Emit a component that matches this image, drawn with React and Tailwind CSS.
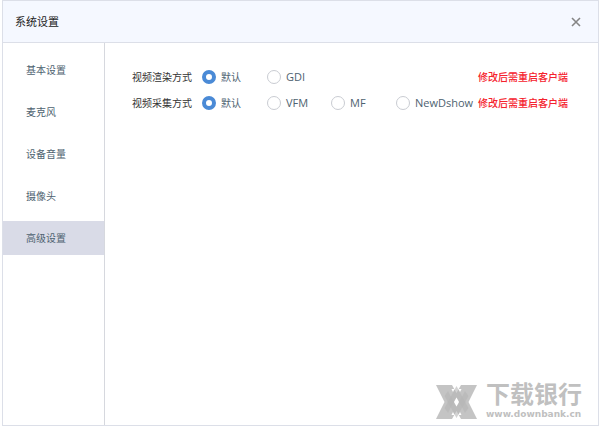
import React, { useState } from "react";

const sections = ["基本设置", "麦克风", "设备音量", "摄像头", "高级设置"];

const groups = [
  { name: "render", label: "视频渲染方式", options: ["默认", "GDI"] },
  { name: "capture", label: "视频采集方式", options: ["默认", "VFM", "MF", "NewDshow"] },
];

function RadioRow({ name, label, options }) {
  const [value, setValue] = useState(options[0]);
  return (
    <div
      role="radiogroup"
      aria-label={label}
      className="grid h-[26px] grid-cols-[70px_65px_64px_65px_82px_1fr] items-center"
    >
      <span className="text-[#333]">{label}</span>
      {options.map((option) => (
        <label key={option} className="flex items-center gap-[5px] whitespace-nowrap text-[#4e6270]">
          <input
            type="radio"
            name={name}
            checked={value === option}
            onChange={() => setValue(option)}
            className="size-3.5 shrink-0 appearance-none rounded-full border border-[#c9ccd2] bg-white checked:border-[4px] checked:border-[#4a8ad6]"
          />
          <span className={option === "默认" ? "text-[10px]/4" : "font-['Open_Sans',sans-serif] text-[11px]/4"}>
            {option}
          </span>
        </label>
      ))}
      <span className="col-start-6 font-medium whitespace-nowrap text-[#f5222d]">修改后需重启客户端</span>
    </div>
  );
}

function Watermark() {
  return (
    <div className="absolute right-4 bottom-1 flex items-center gap-[9px] text-[#c0c0c0]">
      <svg viewBox="0 0 41 34" className="h-[34px] w-[41px]" aria-hidden="true">
        <path d="M0 0H16L20.500 8L25 0H41L32.500 17L41 34H25L20.500 26L16 34H0L8.500 17Z" fill="#c4c4c4" />
        <path d="M20.500 1L32.500 23L29 28L20.500 12L12 28L8.500 23Z" fill="#b6b6b6" opacity=".6" />
        <path d="M20.500 33L32.500 11L29 6L20.500 22L12 6L8.500 11Z" fill="#b6b6b6" opacity=".6" />
        <path d="M20.500 12.500L18 17L20.500 21.500L23 17ZM15.500 4H18.500L17 7ZM25.500 4H22.500L24 7ZM15.500 30H18.500L17 27ZM25.500 30H22.500L24 27Z" fill="#fff" />
      </svg>
      <div>
        <div className="font-['Liberation_Sans','Noto_Sans_CJK_SC',sans-serif] text-[24px]/6 font-bold">下载银行</div>
        <div className="font-['DejaVu_Sans',sans-serif] text-[9px]/[14px] font-bold">www.downbank.cn</div>
      </div>
    </div>
  );
}

export default function App() {
  const [active, setActive] = useState("高级设置");
  return (
    <div className="flex min-h-screen flex-col bg-white pr-px pb-px pl-0.5 font-['Noto_Sans','Noto_Sans_CJK_SC',sans-serif] text-[10px]/4">
      <div className="relative flex grow flex-col border border-[#dcdfe8]">
        <header className="flex h-[42px] items-center justify-between border-b border-[#dcdfe8] bg-[#f5f8ff] pr-[15px] pl-3">
          <h1 className="text-[11px]/4 text-[#222]">系统设置</h1>
          <button type="button" aria-label="关闭" className="p-0.5 text-[#858585]">
            <svg viewBox="0 0 10 10" className="size-2.5" fill="none" stroke="currentColor" strokeWidth="1.600">
              <path d="M1 1L9 9M9 1L1 9" />
            </svg>
          </button>
        </header>
        <div className="flex grow">
          <nav className="flex w-[102px] shrink-0 flex-col gap-2 border-r border-[#d6d8de] pt-2.5">
            {sections.map((s) => (
              <button
                key={s}
                type="button"
                onClick={() => setActive(s)}
                className={`h-[34px] pl-[23px] text-left text-[#4e6270] ${s === active ? "bg-[#d9dbe7]" : ""}`}
              >
                {s}
              </button>
            ))}
          </nav>
          <main className="grow pt-[21px] pl-[27px]">
            {groups.map((g) => (
              <RadioRow key={g.name} {...g} />
            ))}
          </main>
        </div>
        <Watermark />
      </div>
    </div>
  );
}
